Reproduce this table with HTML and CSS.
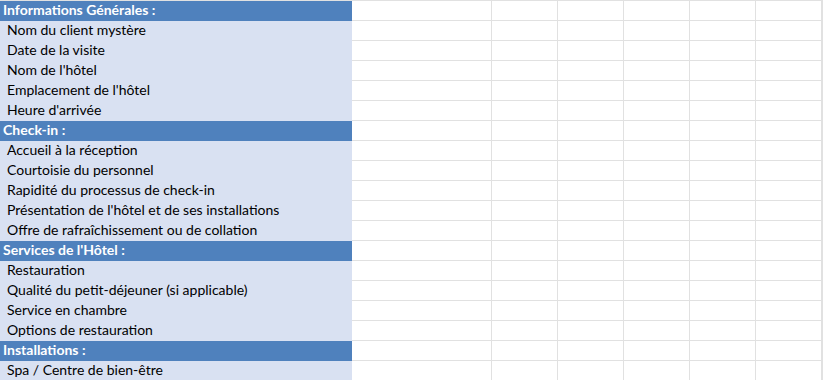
FILE: index.html
```html
<!DOCTYPE html>
<html lang="fr">
<head>
<meta charset="utf-8">
<title>Grille client mystère</title>
<link rel="stylesheet" href="styles.css">
</head>
<body>
<div class="sheet">
  <div class="row head"><div class="label">Informations Générales :</div><div class="c"></div><div class="c"></div><div class="c"></div><div class="c"></div><div class="c"></div><div class="c"></div><div class="c"></div></div>
  <div class="row"><div class="label">Nom du client mystère</div><div class="c"></div><div class="c"></div><div class="c"></div><div class="c"></div><div class="c"></div><div class="c"></div><div class="c"></div></div>
  <div class="row"><div class="label">Date de la visite</div><div class="c"></div><div class="c"></div><div class="c"></div><div class="c"></div><div class="c"></div><div class="c"></div><div class="c"></div></div>
  <div class="row"><div class="label">Nom de l'hôtel</div><div class="c"></div><div class="c"></div><div class="c"></div><div class="c"></div><div class="c"></div><div class="c"></div><div class="c"></div></div>
  <div class="row"><div class="label">Emplacement de l'hôtel</div><div class="c"></div><div class="c"></div><div class="c"></div><div class="c"></div><div class="c"></div><div class="c"></div><div class="c"></div></div>
  <div class="row"><div class="label">Heure d'arrivée</div><div class="c"></div><div class="c"></div><div class="c"></div><div class="c"></div><div class="c"></div><div class="c"></div><div class="c"></div></div>
  <div class="row head"><div class="label">Check-in :</div><div class="c"></div><div class="c"></div><div class="c"></div><div class="c"></div><div class="c"></div><div class="c"></div><div class="c"></div></div>
  <div class="row"><div class="label">Accueil à la réception</div><div class="c"></div><div class="c"></div><div class="c"></div><div class="c"></div><div class="c"></div><div class="c"></div><div class="c"></div></div>
  <div class="row"><div class="label">Courtoisie du personnel</div><div class="c"></div><div class="c"></div><div class="c"></div><div class="c"></div><div class="c"></div><div class="c"></div><div class="c"></div></div>
  <div class="row"><div class="label">Rapidité du processus de check-in</div><div class="c"></div><div class="c"></div><div class="c"></div><div class="c"></div><div class="c"></div><div class="c"></div><div class="c"></div></div>
  <div class="row"><div class="label">Présentation de l'hôtel et de ses installations</div><div class="c"></div><div class="c"></div><div class="c"></div><div class="c"></div><div class="c"></div><div class="c"></div><div class="c"></div></div>
  <div class="row"><div class="label">Offre de rafraîchissement ou de collation</div><div class="c"></div><div class="c"></div><div class="c"></div><div class="c"></div><div class="c"></div><div class="c"></div><div class="c"></div></div>
  <div class="row head"><div class="label">Services de l'Hôtel :</div><div class="c"></div><div class="c"></div><div class="c"></div><div class="c"></div><div class="c"></div><div class="c"></div><div class="c"></div></div>
  <div class="row"><div class="label">Restauration</div><div class="c"></div><div class="c"></div><div class="c"></div><div class="c"></div><div class="c"></div><div class="c"></div><div class="c"></div></div>
  <div class="row"><div class="label">Qualité du petit-déjeuner (si applicable)</div><div class="c"></div><div class="c"></div><div class="c"></div><div class="c"></div><div class="c"></div><div class="c"></div><div class="c"></div></div>
  <div class="row"><div class="label">Service en chambre</div><div class="c"></div><div class="c"></div><div class="c"></div><div class="c"></div><div class="c"></div><div class="c"></div><div class="c"></div></div>
  <div class="row"><div class="label">Options de restauration</div><div class="c"></div><div class="c"></div><div class="c"></div><div class="c"></div><div class="c"></div><div class="c"></div><div class="c"></div></div>
  <div class="row head"><div class="label">Installations :</div><div class="c"></div><div class="c"></div><div class="c"></div><div class="c"></div><div class="c"></div><div class="c"></div><div class="c"></div></div>
  <div class="row"><div class="label">Spa / Centre de bien-être</div><div class="c"></div><div class="c"></div><div class="c"></div><div class="c"></div><div class="c"></div><div class="c"></div><div class="c"></div></div>
</div>
</body>
</html>
```

FILE: styles.css
```css
html, body {
  margin: 0;
  padding: 0;
  background: #ffffff;
}

body {
  font-family: Lato, "Liberation Sans", sans-serif;
  font-size: 14px;
  color: #000000;
  overflow: hidden;
}

.sheet {
  border-top: 1px solid #e1e1e1;
}

.row {
  display: grid;
  grid-template-columns: 352px 140px repeat(5, 66px) 1fr;
  height: 20px;
}

.label {
  background: #d9e1f2;
  border-bottom: 1px solid #d9e1f2;
  padding-left: 7px;
  line-height: 17px;
  white-space: nowrap;
  overflow: hidden;
}

.row.head .label {
  background: #4f81bd;
  border-bottom-color: #4f81bd;
  color: #ffffff;
  font-weight: 700;
  padding-left: 3px;
}

.c {
  border-right: 1px solid #e1e1e1;
  border-bottom: 1px solid #e1e1e1;
}
```
